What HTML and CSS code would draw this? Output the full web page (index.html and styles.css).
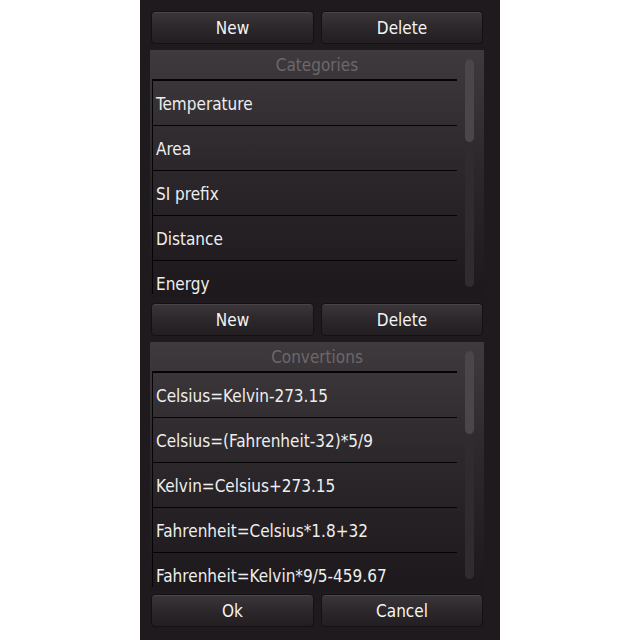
FILE: index.html
```html
<!DOCTYPE html>
<html>
<head>
<meta charset="utf-8">
<link rel="stylesheet" href="styles.css">
</head>
<body>
<div class="panel">
  <div class="btnrow">
    <button class="btn">New</button>
    <button class="btn">Delete</button>
  </div>
  <div class="list list-a">
    <div class="list-head">Categories</div>
    <div class="list-body">
      <div class="items">
        <div class="item">Temperature</div>
        <div class="item">Area</div>
        <div class="item">SI prefix</div>
        <div class="item">Distance</div>
        <div class="item">Energy</div>
      </div>
      <div class="scroll"><div class="thumb"></div></div>
    </div>
  </div>
  <div class="btnrow mid">
    <button class="btn">New</button>
    <button class="btn">Delete</button>
  </div>
  <div class="list list-b">
    <div class="list-head">Convertions</div>
    <div class="list-body">
      <div class="items">
        <div class="item">Celsius=Kelvin-273.15</div>
        <div class="item">Celsius=(Fahrenheit-32)*5/9</div>
        <div class="item">Kelvin=Celsius+273.15</div>
        <div class="item">Fahrenheit=Celsius*1.8+32</div>
        <div class="item">Fahrenheit=Kelvin*9/5-459.67</div>
      </div>
      <div class="scroll"><div class="thumb"></div></div>
    </div>
  </div>
  <div class="btnrow bottom">
    <button class="btn">Ok</button>
    <button class="btn">Cancel</button>
  </div>
</div>
</body>
</html>
```
FILE: styles.css
```css
html, body {
  margin: 0;
  padding: 0;
  background: #ffffff;
}
body {
  display: flex;
  justify-content: center;
  font-family: "DejaVu Sans Condensed", "DejaVu Sans", sans-serif;
}
.panel {
  width: 360px;
  height: 640px;
  box-sizing: border-box;
  background: #1e1a1d;
  padding: 11px 16px 0 10px;
  display: flex;
  flex-direction: column;
}
.btnrow {
  display: grid;
  grid-template-columns: 163px 162px;
  column-gap: 7px;
  margin-left: 1px;
  height: 32px;
}
.btnrow.mid { margin-top: 6px; }
.btnrow.bottom { margin-top: 3px; }
.btn {
  font-family: inherit;
  font-size: 17px;
  color: #f4f4f4;
  border: 1px solid #141113;
  border-radius: 4px;
  background: linear-gradient(#3b3639, #2a2629 55%, #221e21);
  box-shadow: inset 0 1px 0 #4a4548;
  padding: 1px 0 0;
  margin: 0;
  line-height: 30px;
}
.list {
  margin-top: 7px;
  width: 334px;
  height: 247px;
  background: linear-gradient(#3f3a3d, #2c282b 45%, #1c181b);
  display: flex;
  flex-direction: column;
}
.list-b { height: 249px; }
.list-head {
  height: 29px;
  line-height: 30px;
  text-align: center;
  color: #6c686b;
  font-size: 17px;
}
.list-body {
  position: relative;
  height: 215px;
  display: flex;
}
.list-b .list-body { height: 216px; }
.items {
  margin-left: 2px;
  width: 305px;
  height: 100%;
  overflow: hidden;
  border-top: 2px solid #050405;
  border-left: 1px solid #050405;
  box-sizing: border-box;
}
.item {
  height: 45px;
  box-sizing: border-box;
  border-bottom: 1px solid #050405;
  color: #eeeeee;
  font-size: 17px;
  line-height: 46px;
  padding-left: 3px;
  white-space: nowrap;
}
.scroll {
  position: absolute;
  left: 315px;
  top: -20px;
  width: 9px;
  height: 228px;
  border-radius: 5px;
  background: #2f2b2e;
}
.thumb {
  height: 83px;
  border-radius: 5px;
  background: #4b4749;
}
```
